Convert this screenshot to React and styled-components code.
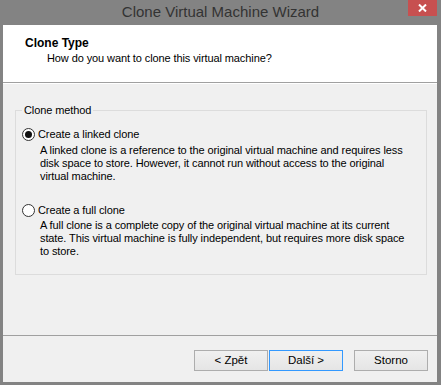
import React from "react";
import styled, { createGlobalStyle } from "styled-components";

const Global = createGlobalStyle`
  html, body { margin: 0; padding: 0; background: #838383; }
  body { font-family: "Liberation Sans", Arial, sans-serif; }
`;

const Window = styled.div`
  width: 441px;
  height: 385px;
  box-sizing: border-box;
  background: #838383;
  padding: 0 4px 3px 3px;
  display: flex;
  flex-direction: column;
`;

const TitleBar = styled.div`
  height: 25px;
  flex: none;
  position: relative;
  display: flex;
  align-items: center;
  justify-content: center;
`;

const Title = styled.div`
  font-family: "Liberation Sans", Arial, sans-serif;
  font-size: 15px;
  color: #333;
  margin-top: -2px;
  margin-left: 1px;
`;

const CloseButton = styled.div`
  position: absolute;
  right: 0;
  top: 0;
  width: 29px;
  height: 16px;
  background: #c75050;
  display: flex;
  align-items: center;
  justify-content: center;
`;

const Client = styled.div`
  flex: 1;
  background: #f0f0f0;
  display: flex;
  flex-direction: column;
  font-family: "Liberation Sans", Arial, sans-serif;
  font-size: 11px;
  letter-spacing: -0.1px;
  color: #000;
`;

const Header = styled.div`
  height: 58px;
  flex: none;
  background: #fff;
  border-bottom: 1px solid #a0a0a0;
  box-sizing: border-box;
  padding: 11px 0 0 22px;
  display: flex;
  flex-direction: column;
`;

const HeaderTitle = styled.div`
  font-weight: bold;
  font-size: 12px;
  letter-spacing: 0;
  line-height: 14px;
  height: 14px;
`;

const HeaderSub = styled.div`
  line-height: 14px;
  margin-top: 1px;
  padding-left: 22px;
`;

const Body = styled.div`
  flex: 1;
  padding: 20px 10px 0 12px;
  border-top: 1px solid #fff;
`;

const Group = styled.fieldset`
  margin: 0;
  padding: 0 0 15px 0;
  border: 1px solid #dcdcdc;
  height: 171px;
  box-sizing: border-box;
  min-width: 0;
`;

const Legend = styled.legend`
  margin-left: 6px;
  padding: 0 2px;
  line-height: 13px;
`;

const Option = styled.div`
  display: flex;
  flex-direction: column;
  padding-left: 6px;
  margin-top: ${(p) => p.$top}px;
`;

const RadioRow = styled.label`
  display: flex;
  align-items: center;
  gap: 3px;
  line-height: 13px;
  height: 13px;
`;

const RadioCircle = styled.span`
  width: 13px;
  height: 13px;
  box-sizing: border-box;
  border-radius: 50%;
  border: 1px solid #333;
  background: #fff;
  display: flex;
  align-items: center;
  justify-content: center;
  flex: none;
  &::after {
    content: "";
    width: 7px;
    height: 7px;
    border-radius: 50%;
    background: ${(p) => (p.$checked ? "#111" : "transparent")};
  }
`;

const Description = styled.div`
  padding-left: 18px;
  margin-top: ${(p) => p.$gap}px;
  line-height: 13px;
  white-space: nowrap;
`;

const Footer = styled.div`
  flex: none;
  height: 47px;
  box-sizing: border-box;
  border-top: 1px solid #a0a0a0;
  padding: 14px 9px 0 0;
  display: flex;
  justify-content: flex-end;
  align-items: flex-start;
`;

const Button = styled.button`
  width: 74px;
  height: 21px;
  box-sizing: border-box;
  margin-left: ${(p) => p.$gap}px;
  border: 1px solid ${(p) => (p.$default ? "#3399ff" : "#adadad")};
  background: linear-gradient(#f0f0f0, #e5e5e5);
  font-family: "Liberation Sans", Arial, sans-serif;
  font-size: 11.5px;
  color: #000;
  padding: 0;
  line-height: 19px;
`;

export default function App() {
  return (
    <>
      <Global />
      <Window>
        <TitleBar>
          <Title>Clone Virtual Machine Wizard</Title>
          <CloseButton>
            <svg width="9" height="8" viewBox="0 0 9 8">
              <path d="M1 0.5 L8 7.5 M8 0.5 L1 7.5" stroke="#fff" strokeWidth="2" />
            </svg>
          </CloseButton>
        </TitleBar>
        <Client>
          <Header>
            <HeaderTitle>Clone Type</HeaderTitle>
            <HeaderSub>How do you want to clone this virtual machine?</HeaderSub>
          </Header>
          <Body>
            <Group>
              <Legend>Clone method</Legend>
              <Option $top={11}>
                <RadioRow>
                  <RadioCircle $checked />
                  Create a linked clone
                </RadioRow>
                <Description $gap={3}>
                  A linked clone is a reference to the original virtual machine and requires less
                  <br />
                  disk space to store. However, it cannot run without access to the original
                  <br />
                  virtual machine.
                </Description>
              </Option>
              <Option $top={21}>
                <RadioRow>
                  <RadioCircle />
                  Create a full clone
                </RadioRow>
                <Description $gap={2}>
                  A full clone is a complete copy of the original virtual machine at its current
                  <br />
                  state. This virtual machine is fully independent, but requires more disk space
                  <br />
                  to store.
                </Description>
              </Option>
            </Group>
          </Body>
          <Footer>
            <Button $gap={0}>&lt; Zpět</Button>
            <Button $gap={1} $default>Další &gt;</Button>
            <Button $gap={11}>Storno</Button>
          </Footer>
        </Client>
      </Window>
    </>
  );
}
